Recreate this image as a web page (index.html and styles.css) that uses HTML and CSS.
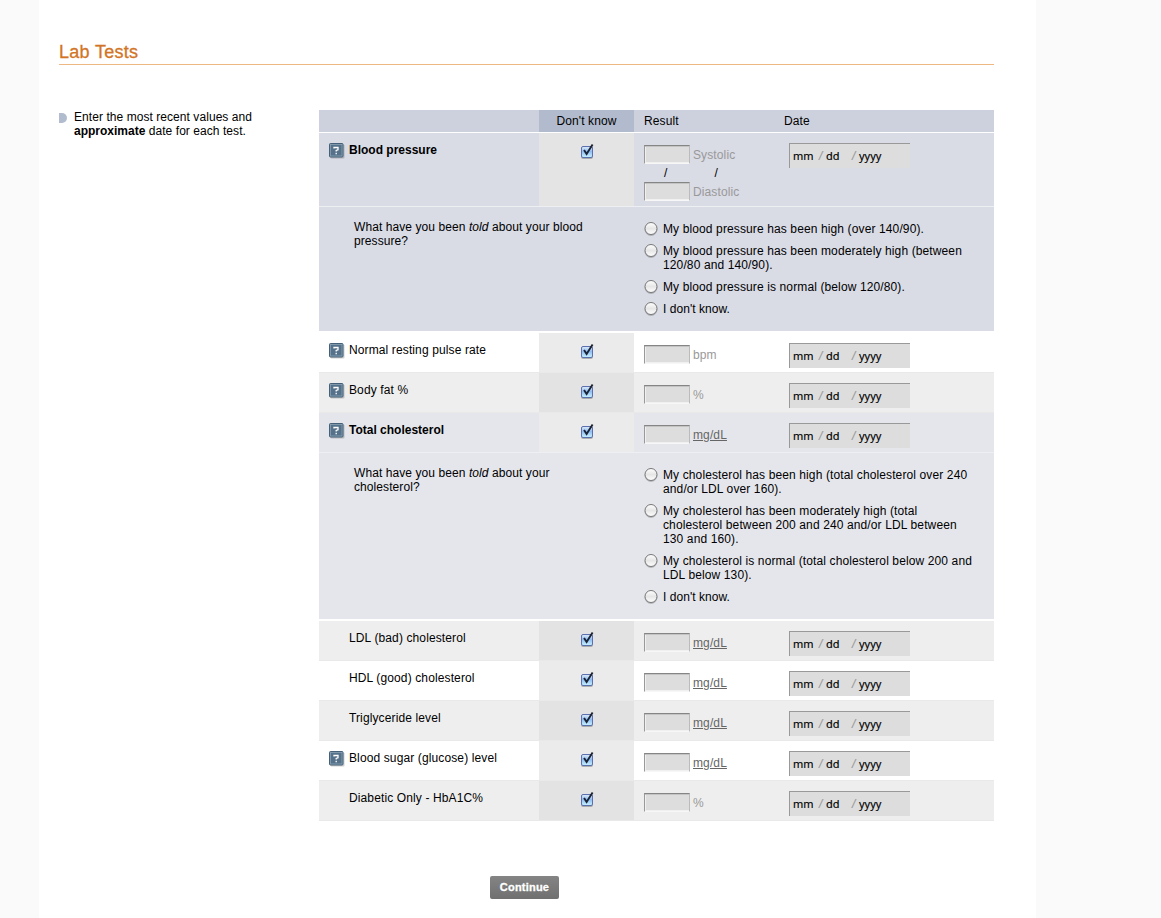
FILE: index.html
```html
<!DOCTYPE html>
<html lang="en">
<head>
<meta charset="utf-8">
<title>Lab Tests</title>
<link rel="stylesheet" href="styles.css">
</head>
<body>
<svg class="defs" width="0" height="0">
  <defs>
    <linearGradient id="blue" x1="0" y1="0" x2="0" y2="1"><stop offset="0" stop-color="#e2edfb"/><stop offset=".45" stop-color="#8fbdf2"/><stop offset="1" stop-color="#c9f2ff"/></linearGradient>
    <linearGradient id="ring" x1="0" y1="0" x2="0" y2="1"><stop offset="0" stop-color="#fff"/><stop offset=".5" stop-color="#e6e6e6"/><stop offset="1" stop-color="#fff"/></linearGradient>
    <symbol id="help" viewBox="0 0 16 16"><rect x="1.5" y="1.5" width="14" height="14" rx="1" fill="#000" opacity=".18"/><rect x=".5" y=".5" width="13.5" height="13.5" rx="1" fill="#55728a" stroke="#456179"/><rect x="1.5" y="1.5" width="11.5" height="11.5" fill="none" stroke="#8ba2b3" stroke-width=".8"/><path d="M5 5.4V4.5H9V6.8L7.2 7.5V8.6M7.2 9.7V11.2" fill="none" stroke="#fff" stroke-width="1.3"/></symbol>
    <symbol id="check" viewBox="0 0 16 17"><rect x="2" y="4" width="12" height="12" rx="2" fill="#000" opacity=".25"/><rect x="2.5" y="3.5" width="11" height="11" rx="1.5" fill="url(#blue)" stroke="#5a71ad"/><path d="M5 7L7.6 10.9L13.6 1.4" fill="none" stroke="#1b2435" stroke-width="1.9"/></symbol>
    <symbol id="radio" viewBox="0 0 14 15"><circle cx="7" cy="7.5" r="6.4" fill="#000" opacity=".2"/><circle cx="7" cy="6.5" r="6" fill="url(#ring)" stroke="#777"/></symbol>
  </defs>
</svg>
<main class="page">
  <h1 class="title">Lab Tests</h1>
  <div class="content">
    <aside class="hint"><i class="marker"></i><p>Enter the most recent values and<br><b>approximate</b> date for each test.</p></aside>
    <section class="table">
      <div class="row head"><div></div><div class="know">Don't know</div><div class="result">Result</div><div class="date-head">Date</div></div>

      <div class="row bp blue"><div class="name"><svg class="help"><use href="#help"/></svg><b>Blood pressure</b></div><div class="know"><svg class="check"><use href="#check"/></svg></div>
        <div class="result stack">
          <div class="entry"><input class="field" disabled><span class="unit">Systolic</span></div>
          <div class="slashes"><span>/</span><span>/</span></div>
          <div class="entry"><input class="field" disabled><span class="unit">Diastolic</span></div>
        </div>
        <div class="when"><div class="date"><span class="mm">mm</span><i>/</i><span class="dd">dd</span><i>/</i><span>yyyy</span></div></div></div>
      <div class="question q-bp blue"><p class="ask">What have you been <em>told</em> about your blood<br>pressure?</p>
        <div class="options">
          <label><svg class="radio"><use href="#radio"/></svg><span>My blood pressure has been high (over 140/90).</span></label>
          <label><svg class="radio"><use href="#radio"/></svg><span>My blood pressure has been moderately high (between<br>120/80 and 140/90).</span></label>
          <label><svg class="radio"><use href="#radio"/></svg><span>My blood pressure is normal (below 120/80).</span></label>
          <label><svg class="radio"><use href="#radio"/></svg><span class="idk">I don't know.</span></label>
        </div></div>

      <div class="row"><div class="name"><svg class="help"><use href="#help"/></svg>Normal resting pulse rate</div><div class="know"><svg class="check"><use href="#check"/></svg></div><div class="result"><div class="entry"><input class="field" disabled><span class="unit">bpm</span></div></div><div class="when"><div class="date"><span class="mm">mm</span><i>/</i><span class="dd">dd</span><i>/</i><span>yyyy</span></div></div></div>
      <div class="row gray"><div class="name"><svg class="help"><use href="#help"/></svg>Body fat %</div><div class="know"><svg class="check"><use href="#check"/></svg></div><div class="result"><div class="entry"><input class="field" disabled><span class="unit">%</span></div></div><div class="when"><div class="date"><span class="mm">mm</span><i>/</i><span class="dd">dd</span><i>/</i><span>yyyy</span></div></div></div>
      <div class="row pale"><div class="name"><svg class="help"><use href="#help"/></svg><b>Total cholesterol</b></div><div class="know"><svg class="check"><use href="#check"/></svg></div><div class="result"><div class="entry"><input class="field" disabled><a class="unit">mg/dL</a></div></div><div class="when"><div class="date"><span class="mm">mm</span><i>/</i><span class="dd">dd</span><i>/</i><span>yyyy</span></div></div></div>
      <div class="question q-chol pale"><p class="ask">What have you been <em>told</em> about your<br>cholesterol?</p>
        <div class="options">
          <label><svg class="radio"><use href="#radio"/></svg><span>My cholesterol has been high (total cholesterol over 240<br>and/or LDL over 160).</span></label>
          <label><svg class="radio"><use href="#radio"/></svg><span>My cholesterol has been moderately high (total<br>cholesterol between 200 and 240 and/or LDL between<br>130 and 160).</span></label>
          <label><svg class="radio"><use href="#radio"/></svg><span>My cholesterol is normal (total cholesterol below 200 and<br>LDL below 130).</span></label>
          <label><svg class="radio"><use href="#radio"/></svg><span class="idk">I don't know.</span></label>
        </div></div>

      <div class="row gray"><div class="name plain">LDL (bad) cholesterol</div><div class="know"><svg class="check"><use href="#check"/></svg></div><div class="result"><div class="entry"><input class="field" disabled><a class="unit">mg/dL</a></div></div><div class="when"><div class="date"><span class="mm">mm</span><i>/</i><span class="dd">dd</span><i>/</i><span>yyyy</span></div></div></div>
      <div class="row"><div class="name plain">HDL (good) cholesterol</div><div class="know"><svg class="check"><use href="#check"/></svg></div><div class="result"><div class="entry"><input class="field" disabled><a class="unit">mg/dL</a></div></div><div class="when"><div class="date"><span class="mm">mm</span><i>/</i><span class="dd">dd</span><i>/</i><span>yyyy</span></div></div></div>
      <div class="row gray"><div class="name plain">Triglyceride level</div><div class="know"><svg class="check"><use href="#check"/></svg></div><div class="result"><div class="entry"><input class="field" disabled><a class="unit">mg/dL</a></div></div><div class="when"><div class="date"><span class="mm">mm</span><i>/</i><span class="dd">dd</span><i>/</i><span>yyyy</span></div></div></div>
      <div class="row"><div class="name"><svg class="help"><use href="#help"/></svg>Blood sugar (glucose) level</div><div class="know"><svg class="check"><use href="#check"/></svg></div><div class="result"><div class="entry"><input class="field" disabled><a class="unit">mg/dL</a></div></div><div class="when"><div class="date"><span class="mm">mm</span><i>/</i><span class="dd">dd</span><i>/</i><span>yyyy</span></div></div></div>
      <div class="row gray"><div class="name plain">Diabetic Only - HbA1C%</div><div class="know"><svg class="check"><use href="#check"/></svg></div><div class="result"><div class="entry"><input class="field" disabled><span class="unit">%</span></div></div><div class="when"><div class="date"><span class="mm">mm</span><i>/</i><span class="dd">dd</span><i>/</i><span>yyyy</span></div></div></div>
    </section>
  </div>
  <button class="continue">Continue</button>
</main>
</body>
</html>
```
FILE: styles.css
```css
* { box-sizing: border-box; }
body { margin: 0; background: #fafafa; font: 12px/14px "Liberation Sans", Arial, sans-serif; letter-spacing: .12px; color: #000; height: 918px; overflow: hidden; }
p, h1 { margin: 0; }
b { letter-spacing: 0; }
.defs { display: block; }
.page { width: 997px; height: 918px; margin-left: 39px; padding: 41px 42px 0 20px; background: #fff; }
.title { height: 24px; border-bottom: 1px solid #edb884; font-size: 18px; line-height: 22px; font-weight: normal; letter-spacing: .3px; color: #d27426; -webkit-text-stroke: .3px #d27426; }
.content { display: flex; margin-top: 45px; }
.hint { width: 260px; display: flex; gap: 7px; letter-spacing: .06px; }
.marker { width: 8px; height: 10px; margin-top: 3px; border-radius: 0 5px 5px 0; background: #b2bccf; }
.table { width: 675px; }
.row { display: grid; grid-template-columns: 220px 95px 140px 220px; height: 40px; border-bottom: 1px solid #e9e9e9; }
.know { background: #ebebeb; text-align: center; }
.gray { background: #eee; }
.gray .know { background: #e3e3e3; }
.blue { background: #d9dbe5; }
.blue .know { background: #e4e4e4; }
.pale { background: #e5e6ec; }
.row.blue, .row.pale { border-bottom-color: #eeeff2; }
.head { height: 23px; background: #cdd1de; border-bottom-color: #fff; line-height: 22px; }
.head .know { background: #b1bbcd; }
.head .result, .date-head { padding: 0 10px; }
.bp { height: 74px; }
.name { display: flex; padding: 10px 0 0 10px; gap: 4px; }
.name.plain { padding-left: 30px; }
.help { width: 16px; height: 16px; }
.check { display: block; width: 16px; height: 17px; margin: 10px 0 0 40px; }
.result { padding-left: 10px; }
.row:not(.head) .result { padding-top: 12px; }
.entry { display: flex; gap: 3px; height: 19px; line-height: 20px; }
.field { width: 46px; height: 19px; margin: 0; padding: 0; background: #ddd; border: 1px solid; border-color: #858585 #bbb #f7f7f7 #999; box-shadow: inset 0 1px #c4c4c4, inset 1px -1px #f0f0f0; }
.unit { color: #999; }
a.unit { color: #666; text-decoration: underline; }
.slashes { display: flex; height: 18px; padding-left: 20px; gap: 47px; line-height: 18px; }
.when { padding: 10px 0 0 15px; }
.date { display: flex; width: 121px; height: 25px; padding-left: 3px; background: #ddd; border: solid #999; border-width: 1px 0 0 1px; font: 11px/23px "Noto Sans", sans-serif; letter-spacing: 0; -webkit-text-stroke: .15px; }
.date i { width: 7px; font: italic 12px/24px "Liberation Sans", sans-serif; color: #999; }
.mm { width: 26px; }
.dd { width: 26px; }
.question { display: flex; border-bottom: 2px solid #fff; padding-top: 13px; }
.q-bp { height: 126px; }
.q-chol { height: 168px; }
.ask { width: 325px; padding-left: 35px; letter-spacing: .08px; }
.options { display: flex; flex-direction: column; gap: 8px; padding-top: 2px; }
.options label { display: flex; gap: 5px; white-space: nowrap; }
.idk { letter-spacing: .04px; }
.radio { width: 14px; height: 15px; margin-bottom: -1px; }
.continue { display: block; width: 69px; height: 23px; margin: 55px 0 0 431px; padding: 0; border: 0; border-radius: 2px; background: linear-gradient(#848484, #707070); color: #fff; font: bold 11px/23px "Liberation Sans", Arial, sans-serif; letter-spacing: .2px; -webkit-text-stroke: .3px #fff; }
```
